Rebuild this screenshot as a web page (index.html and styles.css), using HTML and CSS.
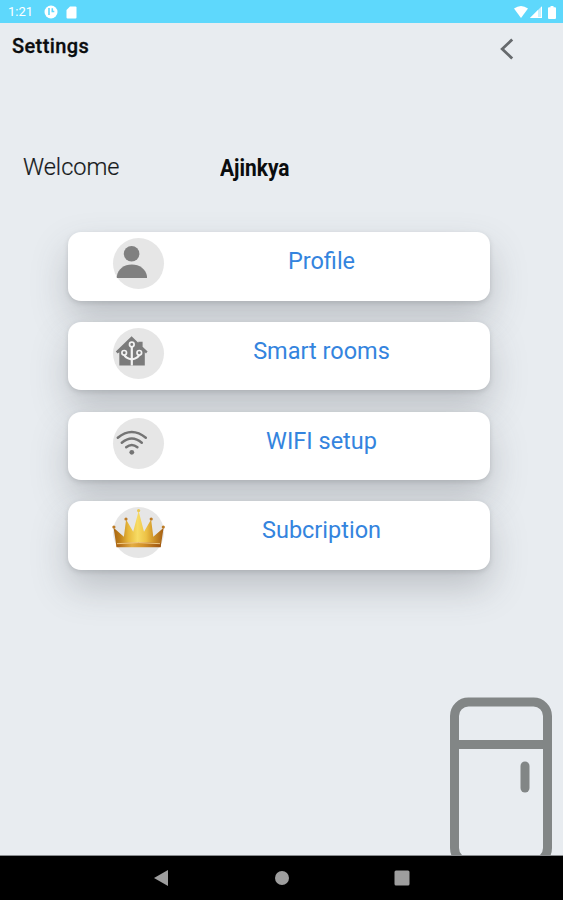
FILE: index.html
```
<!DOCTYPE html>
<html>
<head>
 <meta charset="utf-8">
 <title>Settings</title>
 <link rel="stylesheet" href="styles.css">
</head>
<body>
 <div class="statusbar">
	<span class="clock">1:21</span>
	<svg class="status-app" width="14" height="14" viewBox="0 0 14 14"><circle cx="7" cy="7" r="6.5" fill="#fff"/><path d="M5 3v7M8.3 3.2v3.3h2" stroke="#5ed8fc" stroke-width="1.6" fill="none"/></svg>
	<svg class="status-sd" width="11" height="13" viewBox="0 0 11 13"><path d="M4 .5h5.5a1 1 0 0 1 1 1v10a1 1 0 0 1-1 1h-8a1 1 0 0 1-1-1V4z" fill="#fff"/></svg>
	<span class="status-right">
		<svg width="14" height="12" viewBox="0 0 14 12"><path d="M0 2.6Q7-2.6 14 2.6L7 12z" fill="#fff"/></svg>
		<svg width="12" height="12" viewBox="0 0 12 12"><path d="M0 12L12 0v12z" fill="#fff" opacity=".65"/><path d="M0 12L8 4v8zM11 1h1v11h-4v-1h3z" fill="#fff"/></svg>
		<svg class="battery" width="8" height="13" viewBox="0 0 8 13"><path d="M2.5 0h3v1.3H7q1 0 1 1V12q0 1-1 1H1q-1 0-1-1V2.3q0-1 1-1h1.5z" fill="#fff"/></svg>
	</span>
 </div>
 <div class="main">
	<div class="head">
		<span class="title">Settings</span>
		<svg class="back" width="14" height="22" viewBox="0 0 14 22"><path d="M12.2 1.5L2.2 11l10 9.5" stroke="#666a6d" stroke-width="2.8" fill="none"/></svg>
	</div>
	<div class="hello">
		<span class="welcome">Welcome</span>
		<span class="user">Ajinkya</span>
	</div>
	<div class="menu">
		<div class="item">
			<span class="icon"><svg width="51" height="51" viewBox="0 0 51 51"><circle cx="18.6" cy="15.7" r="7.8" fill="#808080"/><path d="M3.8 40v-1.8C4.8 31 11 26.4 18.8 26.4S33 31 34 38.2V40z" fill="#808080"/></svg></span>
			<span class="label">Profile</span>
		</div>
		<div class="item">
			<span class="icon"><svg width="51" height="51" viewBox="0 0 51 51">
				<path d="M2.8 23.6L18.6 8.3l6.7 6.4v-.9h4.3v5l5 4.8-1.6 1.8-1.2-1.1V37.5H6.3V24.3l-1.7 1.1z" fill="#7b7b7b"/>
				<path d="M18.8 37.5V18.5M18.8 31.5Q12 30 11.3 26.5M18.8 31.5Q25.5 30 26.2 26.5" stroke="#f2f2f2" stroke-width="2.2" fill="none"/>
				<g fill="#7b7b7b" stroke="#f2f2f2" stroke-width="1.7"><circle cx="18.8" cy="16.5" r="2.3"/><circle cx="11.2" cy="24.8" r="2.3"/><circle cx="26.3" cy="24.8" r="2.3"/></g>
			</svg></span>
			<span class="label">Smart rooms</span>
		</div>
		<div class="item">
			<span class="icon"><svg width="51" height="51" viewBox="0 0 51 51"><g stroke="#747474" stroke-width="2.5" stroke-linecap="round" fill="none"><path d="M4.8 19.7Q18.8 8.3 32.8 19.7"/><path d="M8.8 24.7Q18.8 16.3 28.8 24.7"/><path d="M13.2 29.3Q18.8 24.6 24.4 29.3"/></g><circle cx="18.8" cy="34.3" r="2.4" fill="#747474"/></svg></span>
			<span class="label">WIFI setup</span>
		</div>
		<div class="item">
			<span class="icon"><svg width="51" height="51" viewBox="0 0 51 51" overflow="visible">
				<defs>
					<linearGradient id="gold"><stop offset="0" stop-color="#a86512"/><stop offset=".12" stop-color="#bd7d19"/><stop offset=".3" stop-color="#e8b93b"/><stop offset=".48" stop-color="#f7dc65"/><stop offset=".65" stop-color="#edc246"/><stop offset=".76" stop-color="#d8a02e"/><stop offset="1" stop-color="#a35c12"/></linearGradient>
					<linearGradient id="band"><stop offset="0" stop-color="#a85f12"/><stop offset=".35" stop-color="#e3ad42"/><stop offset=".6" stop-color="#d4922a"/><stop offset="1" stop-color="#9b5210"/></linearGradient>
				</defs>
				<path d="M3.5 39.8L.6 20.8l10.3 9 2.2-17.2 7.1 12.1L25.6 4l5.4 20.7 7.1-12.1 2.2 17.2 10.3-9-2.9 19z" fill="url(#gold)"/>
				<path d="M3.5 36.2Q25.6 33.8 47.7 36.2v4H3.5z" fill="url(#band)"/>
				<path d="M4 36.7Q25.6 34.5 47 36.7" stroke="#f4d390" stroke-width=".9" fill="none"/>
				<g fill="#bd7b25"><circle cx=".9" cy="20" r="1.6"/><circle cx="50.3" cy="20" r="1.6"/><circle cx="13" cy="12" r="1.6"/><circle cx="38.2" cy="12" r="1.6"/></g><circle cx="25.6" cy="3.6" r="1.6" fill="#eac754"/>
			</svg></span>
			<span class="label">Subcription</span>
		</div>
	</div>
	<svg class="fridge" width="104" height="158" viewBox="0 0 104 158"><g fill="none" stroke="#828686" stroke-width="9"><rect x="5.5" y="5" width="93" height="160" rx="14"/><path d="M5 47.5h93"/><path d="M76 69v22" stroke-linecap="round"/></g></svg>
 </div>
 <div class="navbar">
	<svg width="16" height="18" viewBox="0 0 16 18"><path d="M1 9L15 1v16z" fill="#9e9e9e"/></svg>
	<svg width="16" height="18" viewBox="0 0 16 18"><circle cx="8" cy="9" r="7" fill="#9e9e9e"/></svg>
	<svg width="16" height="18" viewBox="0 0 16 18"><rect x=".5" y="1.5" width="15" height="15" rx="1.5" fill="#9e9e9e"/></svg>
 </div>
</body>
</html>
```
FILE: styles.css
```
body{margin:0;height:900px;display:flex;flex-direction:column;overflow:hidden;
	font-family:Roboto,"Liberation Sans",sans-serif;background-color:#e8ecf0;}

.statusbar{height:23px;background-color:#5ed8fc;display:flex;align-items:center;padding:1px 7px 0 8px;box-sizing:border-box;color:#fff;}
.clock{font-size:13px;line-height:22px;font-weight:400;width:36px;}
.status-sd{margin-left:8px;}
.status-right{margin-left:auto;display:flex;align-items:center;gap:2px;}
.battery{margin-left:4px;}

.main{height:833px;box-sizing:border-box;display:flex;flex-direction:column;border-bottom:1px solid #8a8d90;}
.head{display:flex;justify-content:space-between;height:48px;padding:10px 49px 0 12px;box-sizing:border-box;}
.title{font-size:20px;line-height:27px;font-weight:500;letter-spacing:.4px;color:#0b0d0e;-webkit-text-stroke:.3px #0b0d0e;}
.back{margin-top:5px;}

.hello{display:flex;margin-top:78px;padding-left:23px;height:36px;line-height:36px;color:#15181a;}
.welcome{width:197px;font-size:23.5px;font-weight:300;-webkit-text-stroke:.2px #15181a;}
.user{font-size:23px;font-weight:700;color:#0b0d0e;transform:scaleX(.91);transform-origin:0 50%;padding-top:2px;}

.menu{display:flex;flex-direction:column;gap:21.3px;margin:47px 73px 0 68px;}
.item{display:flex;height:68.5px;border-radius:13px;background-color:#fff;box-shadow:0 18px 36px rgba(70,75,80,.26),0 2px 5px rgba(70,75,80,.18);}
.icon{width:51px;height:51px;margin:6px 0 0 45px;border-radius:50%;background-color:#e6e6e6;}
.icon svg{display:block;}
.label{width:315px;text-align:center;font-size:23.5px;line-height:59px;color:#3484de;}

.fridge{margin:auto 10px 0 auto;display:block;}

.navbar{height:44px;background-color:#000;display:flex;align-items:center;gap:104.5px;padding-left:153px;}
```
